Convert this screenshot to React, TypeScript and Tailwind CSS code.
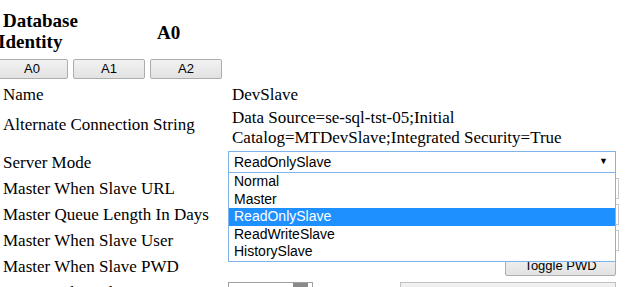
import React from "react";

const serif = "font-['Liberation_Serif','Times_New_Roman',serif]";
const sans = "font-['Liberation_Sans',Arial,sans-serif]";

function Btn({ children, className = "" }: { children: React.ReactNode; className?: string }) {
  return (
    <div
      className={`${sans} flex items-center justify-center h-[20px] text-[13px] text-black border border-[#adadad] rounded-[2px] bg-gradient-to-b from-[#f2f2f2] to-[#e2e2e2] ${className}`}
    >
      {children}
    </div>
  );
}

function Row({ label, children, h = "h-[26px]" }: { label: string; children?: React.ReactNode; h?: string }) {
  return (
    <div className={`flex items-center ${h}`}>
      <div className="w-[228px] shrink-0 pl-[3px] text-[17px] leading-[19px] whitespace-nowrap">{label}</div>
      <div className="flex-1 flex items-center h-full">{children}</div>
    </div>
  );
}

const options = ["Normal", "Master", "ReadOnlySlave", "ReadWriteSlave", "HistorySlave"];

export default function App() {
  return (
    <div className={`relative w-[640px] h-[287px] overflow-hidden bg-white text-black ${serif}`}>
      {/* header */}
      <div className="flex h-[58px]">
        <div className="w-[157px] pt-[10px] text-[19px] font-bold leading-[21px]">
          <div className="pl-[3px]">Database</div>
          <div className="-ml-[2px]">Identity</div>
        </div>
        <div className="pt-[22px] text-[19px] font-bold leading-[21px]">A0</div>
      </div>

      {/* buttons */}
      <div className="flex h-[23px] pt-[1px] gap-[5px] -ml-[4px]">
        <Btn className="w-[72px]">A0</Btn>
        <Btn className="w-[72px]">A1</Btn>
        <Btn className="w-[72px]">A2</Btn>
      </div>

      <Row label="Name">
        <span className="pl-[4px] text-[17px] leading-[19px]">DevSlave</span>
      </Row>

      <div className="flex h-[42px]">
        <div className="w-[228px] shrink-0 pl-[3px] pt-[8px] text-[17px] leading-[19px] whitespace-nowrap">
          Alternate Connection String
        </div>
        <div className="pl-[4px] pt-[1px] text-[17px] leading-[19.5px] whitespace-nowrap">
          <div>Data Source=se-sql-tst-05;Initial</div>
          <div>Catalog=MTDevSlave;Integrated Security=True</div>
        </div>
      </div>

      <Row label="Server Mode">
        <div
          className={`${sans} relative flex items-center w-[388px] h-[22px] border border-[#7eb4ea] bg-white pl-[5px] text-[14px]`}
        >
          ReadOnlySlave
          <span className="absolute right-[7px] top-[5px] text-[9px] leading-none">▼</span>
        </div>
      </Row>
      <Row label="Master When Slave URL">
        <div className="ml-[2px] w-[389px] h-[21px] border border-[#c8c8c8] bg-white" />
      </Row>
      <Row label="Master Queue Length In Days">
        <div className="ml-[2px] w-[389px] h-[21px] border border-[#c8c8c8] bg-white" />
      </Row>
      <Row label="Master When Slave User">
        <div className="ml-[2px] w-[389px] h-[21px] border border-[#c8c8c8] bg-white" />
      </Row>
      <Row label="Master When Slave PWD">
        <div className="w-[388px] flex justify-end">
          <Btn className="w-[111px]">Toggle PWD</Btn>
        </div>
      </Row>
      <Row label="Master When Slave Log Size">
        <div className="flex w-[388px] self-start mt-[3px]">
          <div className="relative w-[85px] h-[20px] border border-[#a0a0a0] bg-white">
            <div className="absolute right-[4px] top-0 w-[15px] h-full bg-[#8a8a8a]" />
          </div>
          <div className="ml-[87px] flex-1 h-[20px] border border-[#c0c0c0] bg-gradient-to-b from-[#f2f2f2] to-[#e2e2e2]" />
        </div>
      </Row>

      {/* open dropdown list */}
      <div
        className={`${sans} absolute left-[228px] top-[172px] w-[388px] h-[90px] border border-[#7eb4ea] bg-white text-[14px] text-black`}
      >
        {options.map((o) => (
          <div
            key={o}
            className={`h-[17.6px] leading-[17.6px] pl-[5px] ${o === "ReadOnlySlave" ? "bg-[#1e90ff] text-white" : ""}`}
          >
            {o}
          </div>
        ))}
      </div>
    </div>
  );
}
